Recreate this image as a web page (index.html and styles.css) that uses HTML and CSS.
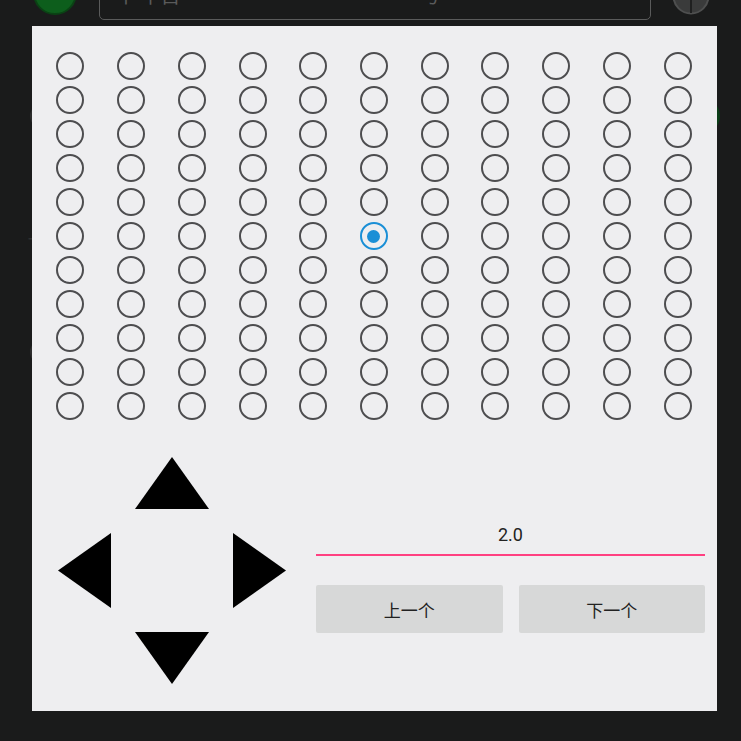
FILE: index.html
```html
<!DOCTYPE html>
<html lang="zh">
<head>
<meta charset="utf-8">
<title>选择</title>
<link rel="stylesheet" href="styles.css">
</head>
<body>
<div class="page">
  <div class="topbar">
    <div class="avatar"></div>
    <div class="search"><span class="q1">中 午首</span><span class="q2">号</span></div>
    <div class="globe"><svg width="38" height="38" viewBox="0 0 38 38"><circle cx="19" cy="19" r="17.5" fill="#3a3b3b" stroke="#4e4f4f" stroke-width="2"/><line x1="19" y1="2" x2="19" y2="36" stroke="#1f2020" stroke-width="2"/></svg></div>
  </div>
  <div class="bgrow">
    <div class="bgicon"></div>
    <div class="bgtoggle"></div>
  </div>
  <div class="bgtext">T</div>
  <div class="bgrow2"><div class="bgicon small"></div></div>
</div>

<div class="dialog">
  <div class="radios" id="radios"></div>

  <div class="controls">
    <div class="dpad">
      <button class="arrow up" aria-label="上"><svg viewBox="0 0 74 52" width="74" height="52"><polygon points="37,0 74,52 0,52"/></svg></button>
      <button class="arrow left" aria-label="左"><svg viewBox="0 0 53 75" width="53" height="75"><polygon points="0,37.5 53,0 53,75"/></svg></button>
      <button class="arrow right" aria-label="右"><svg viewBox="0 0 53 75" width="53" height="75"><polygon points="0,0 53,37.5 0,75"/></svg></button>
      <button class="arrow down" aria-label="下"><svg viewBox="0 0 74 52" width="74" height="52"><polygon points="0,0 74,0 37,52"/></svg></button>
    </div>
    <div class="side">
      <input class="value" type="text" value="2.0">
      <div class="buttons">
        <button class="btn">上一个</button>
        <button class="btn">下一个</button>
      </div>
    </div>
  </div>
</div>
<script src="script.js"></script>
</body>
</html>
```

FILE: script.js
```js
(function () {
  var box = document.getElementById('radios');
  for (var r = 0; r < 11; r++) {
    for (var c = 0; c < 11; c++) {
      var cell = document.createElement('span');
      cell.className = 'cell';
      var dot = document.createElement('span');
      dot.className = 'radio' + (r === 5 && c === 5 ? ' checked' : '');
      cell.appendChild(dot);
      box.appendChild(cell);
    }
  }
})();
```

FILE: styles.css
```css
* { box-sizing: border-box; }
html, body { margin: 0; padding: 0; }
body {
  width: 741px;
  height: 741px;
  overflow: hidden;
  background: #1a1b1b;
  font-family: Roboto, "Noto Sans CJK SC", sans-serif;
}

/* underlying page (dimmed) */
.page { height: 741px; }
.topbar {
  height: 20px;
  display: flex;
  align-items: flex-end;
  padding-left: 33px;
}
.avatar {
  width: 44px;
  height: 44px;
  border-radius: 50%;
  background: #0d5e1c;
  border: 2px solid #0a4214;
  margin-bottom: 5px;
  flex: none;
}
.search {
  width: 552px;
  height: 42px;
  margin-left: 22px;
  border: 1px solid #5a5b5b;
  border-radius: 5px;
  display: flex;
  align-items: flex-end;
  padding: 0 0 14px 16px;
  font-family: "Noto Sans CJK SC", sans-serif;
  font-size: 20px;
  line-height: 20px;
  color: #5a5b5b;
  flex: none;
}
.q2 { margin-left: 240px; }
.globe {
  margin-left: 21px;
  margin-bottom: 5px;
  width: 38px;
  height: 38px;
  flex: none;
}
.globe svg { display: block; }

.bgrow {
  margin-top: 78px;
  display: flex;
  justify-content: space-between;
  align-items: center;
  padding-left: 30px;
  padding-right: 21px;
}
.bgicon {
  width: 24px;
  height: 24px;
  border-radius: 50%;
  border: 2px solid #2c2d2d;
}
.bgtoggle {
  width: 36px;
  height: 36px;
  border-radius: 50%;
  background: #0b3d17;
}
.bgtext {
  margin-top: 100px;
  padding-left: 28px;
  color: #2e2f2f;
  font-size: 20px;
}
.bgrow2 { margin-top: 82px; padding-left: 30px; }

/* dialog overlay */
.dialog {
  position: fixed;
  left: 32px;
  top: 26px;
  width: 685px;
  height: 685px;
  background: #eeeef0;
}
.radios {
  display: grid;
  grid-template-columns: repeat(11, 1fr);
  grid-auto-rows: 34px;
  padding: 23px 9px 0 8px;
}
.cell {
  display: flex;
  align-items: center;
  justify-content: center;
}
.radio {
  width: 28px;
  height: 28px;
  border-radius: 50%;
  border: 2px solid #4d4d4f;
  display: flex;
  align-items: center;
  justify-content: center;
}
.radio.checked { border-color: #1a8fd6; }
.radio.checked::after {
  content: "";
  width: 13px;
  height: 13px;
  border-radius: 50%;
  background: #1a8fd6;
}

.controls {
  display: flex;
  align-items: flex-start;
  margin-top: 34px;
  padding-left: 26px;
}
.dpad {
  display: grid;
  grid-template-columns: 53px 74px 53px;
  grid-template-rows: 52px 75px 52px;
  column-gap: 24px;
  row-gap: 24px;
  flex: none;
}
.arrow {
  border: 0;
  padding: 0;
  margin: 0;
  background: transparent;
  display: block;
}
.arrow svg { display: block; fill: #000; }
.arrow.up { grid-column: 2; grid-row: 1; }
.arrow.left { grid-column: 1; grid-row: 2; }
.arrow.right { grid-column: 3; grid-row: 2; }
.arrow.down { grid-column: 2; grid-row: 3; }

.side {
  margin-left: 30px;
  width: 389px;
  margin-top: 57px;
  display: flex;
  flex-direction: column;
}
.value {
  display: block;
  width: 100%;
  height: 42px;
  border: 0;
  border-bottom: 2px solid #ff4081;
  background: transparent;
  padding: 0;
  margin: 0;
  text-align: center;
  font-family: Roboto, sans-serif;
  font-size: 18px;
  color: #222;
  outline: none;
}
.buttons {
  display: flex;
  gap: 16px;
  margin-top: 29px;
}
.btn {
  flex: 1;
  height: 48px;
  border: 0;
  border-radius: 2px;
  background: #d7d8d8;
  font-family: "Noto Sans CJK SC", sans-serif;
  font-size: 17px;
  color: #222;
  padding: 0;
  margin: 0;
}
```
